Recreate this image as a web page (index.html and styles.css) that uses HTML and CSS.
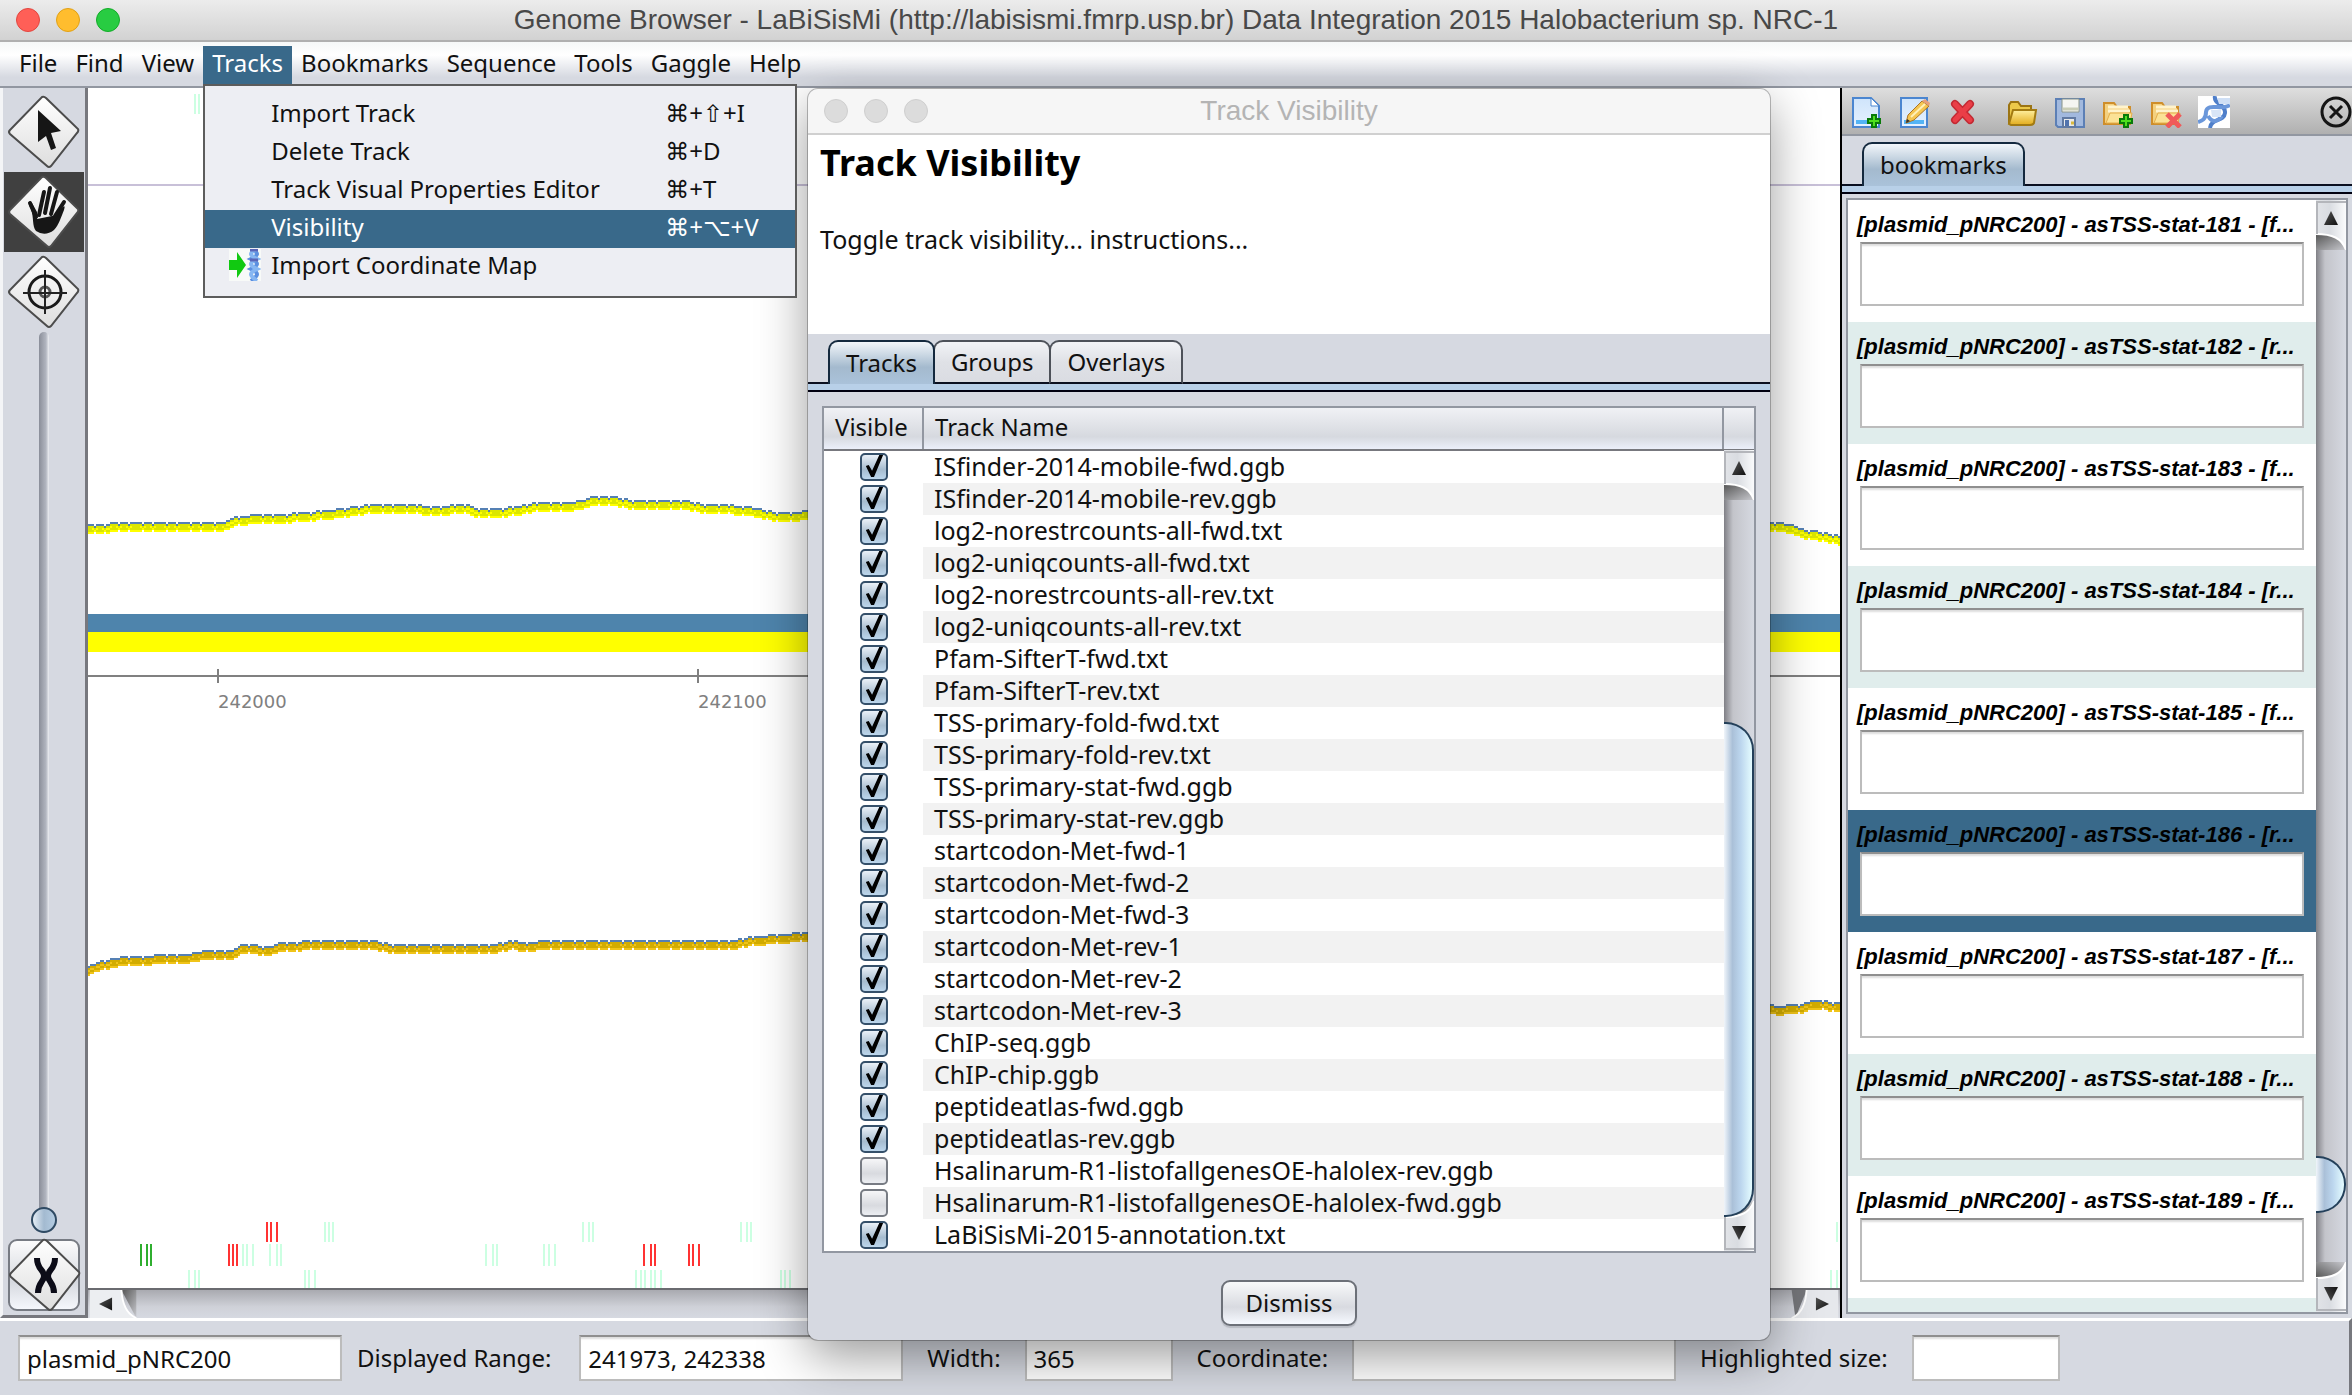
FILE: index.html
```html
<!DOCTYPE html>
<html lang="en">
    <head>
        <meta charset="utf-8">
        <title>Genome Browser</title>
        <meta name="viewport" content="width=device-width, initial-scale=1.0">
        <link rel="stylesheet" href="styles.css">
    </head>
    <body>
        <svg class="defs" aria-hidden="true">
            <defs>
                <linearGradient id="tile" x1="0" y1="0" x2="0" y2="1">
                    <stop offset="0" stop-color="#fff"/><stop offset="1" stop-color="#dedede"/>
                </linearGradient>
                <linearGradient id="ink" x1="0" y1="0" x2="1" y2="1">
                    <stop offset="0" stop-color="#555"/><stop offset="1" stop-color="#111"/>
                </linearGradient>
                <linearGradient id="paper" x1="0" y1="0" x2="0" y2="1">
                    <stop offset="0" stop-color="#cfe4fb"/><stop offset="1" stop-color="#e6f2ff"/>
                </linearGradient>
                <linearGradient id="gold" x1="0" y1="0" x2="0" y2="1">
                    <stop offset="0" stop-color="#fff0a0"/><stop offset="1" stop-color="#e3ac1c"/>
                </linearGradient>
                <linearGradient id="cap" x1="0" y1="0" x2="1" y2="0">
                    <stop offset="0" stop-color="#e2e4e8"/><stop offset=".45" stop-color="#d9dce1"/><stop offset="1" stop-color="#fafbfc"/>
                </linearGradient>
                <linearGradient id="shade" x1="0" y1="0" x2="1" y2="1">
                    <stop offset="0" stop-color="#555"/><stop offset="1" stop-color="#c8c9ce"/>
                </linearGradient>
                <symbol id="diamond" viewBox="0 0 78 78">
                    <path d="M38 7 L73 40 L44 74 L6 43 Z" fill="#888" opacity=".5"/>
                    <path d="M37 4 Q39 3 41 5 L73 36 Q74 38 72 40 L46 73 Q44 75 42 73 L5 41 Q3 39 5 37 Z" fill="url(#tile)" stroke="#4c4c4c" stroke-width="2"/>
                </symbol>
                <symbol id="plus" viewBox="0 0 14 14">
                    <path d="M5 1h4v4h4v4h-4v4h-4v-4h-4v-4h4z" fill="#4fe01e" stroke="#0a7a0a" stroke-width="2"/>
                </symbol>
                <symbol id="folder" viewBox="0 0 32 32">
                    <path d="M2 7h10l3 4h13v17H2z" fill="#f4d180" stroke="#cf8e2a" stroke-width="2"/>
                    <path d="M6 11h20M6 15h22" stroke="#fff3cc" stroke-width="3"/>
                    <path d="M4 27L8 17h22l-2 10z" fill="#fbe296" stroke="#e4ae4c"/>
                </symbol>
                <symbol id="up" viewBox="0 0 30 50">
                    <path d="M0 34H20L30 50H0z" fill="url(#shade)"/>
                    <path d="M0 0H30V50C26 38 16 34 0 34z" fill="url(#cap)"/>
                    <path d="M0 34C16 34 26 38 30 50" fill="none" stroke="#fff" stroke-width="2"/>
                    <path d="M1 34V2H30" fill="none" stroke="#b4b6bb" stroke-width="2"/>
                    <path d="M15 11L22 25H8z" fill="url(#ink)"/>
                </symbol>
            </defs>
        </svg>

        <header class="titlebar">
            <div class="lights"><i class="red"></i><i class="amber"></i><i class="green"></i></div>
            <span>Genome Browser - LaBiSisMi (http://labisismi.fmrp.usp.br) Data Integration 2015 Halobacterium sp. NRC-1</span>
        </header>

        <nav class="menubar">
            <button>File</button>
            <button>Find</button>
            <button>View</button>
            <div class="menu-holder">
                <button class="open">Tracks</button>
                <div class="menu">
                    <button><i></i><span>Import Track</span><kbd>⌘+⇧+I</kbd></button>
                    <button><i></i><span>Delete Track</span><kbd>⌘+D</kbd></button>
                    <button><i></i><span>Track Visual Properties Editor</span><kbd>⌘+T</kbd></button>
                    <button class="selected"><i></i><span>Visibility</span><kbd>⌘+⌥+V</kbd></button>
                    <button>
                        <svg class="map-icon" viewBox="0 0 32 32">
                            <rect width="32" height="32" fill="#f8faf8"/>
                            <path d="M0 11h8V3l9 13-9 13v-8H0z" fill="#11c911"/>
                            <path d="M22 0c8 4 8 6 0 10 8 4 8 6 0 10 8 4 8 6 0 12" fill="none" stroke="#5b8fe0" stroke-width="4"/>
                            <path d="M28 0c-8 4-8 6 0 10-8 4-8 6 0 10-8 4-8 6 0 12" fill="none" stroke="#86b6f2" stroke-width="4"/>
                            <path d="M21 1h8M21 11h8" stroke="#5a66b8" stroke-width="3"/>
                        </svg>
                        <span>Import Coordinate Map</span><kbd></kbd>
                    </button>
                </div>
            </div>
            <button>Bookmarks</button>
            <button>Sequence</button>
            <button>Tools</button>
            <button>Gaggle</button>
            <button>Help</button>
        </nav>

        <main>
            <div class="tools">
                <button aria-label="Select">
                    <svg viewBox="0 0 78 78"><use href="#diamond"/>
                        <path d="M33 17L56 38 46 40 51 55 46 57 41 43 33 49z" fill="#161616"/>
                    </svg>
                </button>
                <button class="active" aria-label="Hand">
                    <svg viewBox="0 0 78 78"><use href="#diamond"/>
                        <path d="M26 36C22 30 24 26 27 30L32 39V46L52 42C58 32 61 31 59 37C56 44 54 52 49 57Q40 64 31 58C27 53 29 45 26 36z" fill="#161616"/>
                        <path d="M34 42L39 19M40 40L45 15M46 41L52 19M50 43L59 29M31 44L25 30" stroke="#161616" stroke-width="4" stroke-linecap="round"/>
                    </svg>
                </button>
                <button aria-label="Crosshairs">
                    <svg viewBox="0 0 78 78"><use href="#diamond"/>
                        <circle cx="40" cy="39" r="16" fill="none" stroke="#1a1a1a" stroke-width="3"/>
                        <circle cx="40" cy="39" r="5" fill="none" stroke="#555" stroke-width="3"/>
                        <path d="M40 17V61M18 40H62" stroke="#222" stroke-width="2"/>
                    </svg>
                </button>
                <input class="zoom-slider" type="range" min="0" max="100" value="0" aria-label="Zoom">
                <button class="framed" aria-label="Chromosome">
                    <svg viewBox="0 0 78 78"><use href="#diamond"/>
                        <path d="M31 22C31 34 38 33 38 40C38 46 32 46 32 57M49 22C49 34 42 33 42 40C42 46 48 46 48 57" fill="none" stroke="#0c0c18" stroke-width="6"/>
                    </svg>
                </button>
            </div>

            <section class="view">
                <svg id="plot" viewBox="88 88 1752 1200" preserveAspectRatio="xMinYMin slice" shape-rendering="crispEdges">
                    <rect x="88" y="184" width="1752" height="2" fill="#c8c0d8"/>
                    <rect x="88" y="614" width="1752" height="18" fill="#4e84ac"/>
                    <rect x="88" y="632" width="1752" height="20" fill="#ff0"/>
                    <g fill="#808080">
                        <rect x="88" y="675" width="1752" height="2"/>
                        <rect x="217" y="669" width="2" height="14"/>
                        <rect x="697" y="669" width="2" height="14"/>
                        <text x="218" y="708">242000</text>
                        <text x="698" y="708">242100</text>
                    </g>
                </svg>
                <div class="hscroll">
                    <svg viewBox="0 0 50 30"><path d="M34 0H50V30z" fill="url(#shade)"/><path d="M0 0H34C35 16 40 26 50 30H0z" fill="#eceef1"/><path d="M34 0C35 16 40 26 50 30" fill="none" stroke="#fff" stroke-width="2"/><path d="M24 8V22L10 15z" fill="url(#ink)"/></svg>
                    <svg viewBox="0 0 50 30"><path d="M16 0H0L4 30z" fill="#75767a"/><path d="M50 0H16C15 16 10 26 0 30H50z" fill="#e6e8ec"/><path d="M16 0C15 16 10 26 0 30" fill="none" stroke="#fff" stroke-width="2"/><path d="M26 8V22L40 15z" fill="url(#ink)"/></svg>
                </div>
            </section>

            <aside class="sidebar">
                <div class="icons">
                    <button aria-label="New bookmark"><svg viewBox="0 0 32 32">
                        <path d="M3 2H21L29 10V31H3z" fill="url(#paper)" stroke="#4b86d0" stroke-width="2"/>
                        <path d="M21 2V10H29z" fill="#fff" stroke="#4b86d0"/><path d="M6 26H19" stroke="#53b4f5" stroke-width="4"/>
                        <use href="#plus" x="17" y="18" width="14" height="14"/></svg></button>
                    <button aria-label="Edit bookmark"><svg viewBox="0 0 32 32">
                        <path d="M3 2H29V31H3z" fill="url(#paper)" stroke="#4b86d0" stroke-width="2"/><path d="M6 26H26" stroke="#53b4f5" stroke-width="4"/>
                        <path d="M8 27L10 19 24 5 31 10 16 24z" fill="#f4c552" stroke="#ae7422"/><path d="M13 21L27 8" stroke="#fff0b8" stroke-width="2"/><path d="M24 5L27 3 32 7 31 10z" fill="#e8a07a"/><path d="M8 27L9 23 12 25z" fill="#333"/></svg></button>
                    <button aria-label="Delete bookmark"><svg viewBox="0 0 32 32">
                        <path d="M9 8L24 24M24 8L9 24" stroke="#c32a33" stroke-width="8" stroke-linecap="round"/><path d="M9 8L24 24M24 8L9 24" stroke="#ea3e47" stroke-width="5" stroke-linecap="round"/></svg></button>
                    <button class="spaced" aria-label="Open"><svg viewBox="0 0 32 32">
                        <path d="M3 28V9L5 6H12L15 10H25V14" fill="#ecc94a" stroke="#9b7413" stroke-width="2"/>
                        <path d="M3 28L7 14H30L28 27Q27 29 24 29H5z" fill="url(#gold)" stroke="#a37b12" stroke-width="2"/></svg></button>
                    <button aria-label="Save"><svg viewBox="0 0 32 32">
                        <path d="M2 3H30V31H4L2 29z" fill="#a2b9de" stroke="#5c7fb5" stroke-width="2"/>
                        <path d="M8 3H25V16H8z" fill="#f5f5f1" stroke="#8a9487"/><path d="M9 13H24" stroke="#c9cdb6" stroke-width="3"/>
                        <path d="M9 22H21V31H9z" fill="#e9eaea" stroke="#617aa2" stroke-width="2"/><path d="M11 24H15V30H11z" fill="#5173ad"/><path d="M17 27H20" stroke="#d9b93e" stroke-width="3"/></svg></button>
                    <button aria-label="Add group"><svg viewBox="0 0 32 32"><use href="#folder"/><use href="#plus" x="17" y="18" width="14" height="14"/></svg></button>
                    <button aria-label="Remove group"><svg viewBox="0 0 32 32"><use href="#folder"/><path d="M17 18L30 31M30 18L17 31" stroke="#f05a5a" stroke-width="5"/></svg></button>
                    <button aria-label="Sequence"><svg viewBox="0 0 32 32">
                        <rect width="32" height="32" fill="#fff"/>
                        <path d="M17 0C15 8 28 8 27 17C26 26 13 22 12 32" fill="none" stroke="#4f7fca" stroke-width="4"/>
                        <path d="M32 9C24 15 9 6 8 16C8 24 3 25 0 26M10 20C15 28 20 25 24 20" fill="none" stroke="#6b97da" stroke-width="4"/>
                        <path d="M19 2H32V8L21 8z" fill="#cfdff5"/><path d="M13 14H23V21H14z" fill="#d8e5f7"/></svg></button>
                    <button class="close" aria-label="Close"><svg viewBox="0 0 32 32">
                        <circle cx="16" cy="16" r="14" fill="none" stroke="#151515" stroke-width="3"/><path d="M10 10L22 22M22 10L10 22" stroke="#151515" stroke-width="3"/></svg></button>
                </div>
                <div class="tabs"><button class="tab on">bookmarks</button></div>
                <div class="tab-line"></div>
                <div class="list-box">
                    <ul id="bookmarks"></ul>
                    <div class="scrollbar">
                        <svg><use href="#up"/></svg>
                        <div class="before"></div>
                        <div class="thumb"></div>
                        <div class="after"></div>
                        <svg class="down"><use href="#up"/></svg>
                    </div>
                </div>
            </aside>
        </main>

        <footer class="status">
            <input class="wide" type="text" value="plasmid_pNRC200" aria-label="Sequence">
            <label class="near" for="range">Displayed Range:</label>
            <input class="wide" type="text" id="range" value="241973, 242338">
            <label for="width">Width:</label>
            <input type="text" id="width" value="365">
            <label for="coordinate">Coordinate:</label>
            <input class="wide" type="text" id="coordinate">
            <label for="highlighted">Highlighted size:</label>
            <input type="text" id="highlighted">
        </footer>

        <div class="dialog" role="dialog" aria-label="Track Visibility">
            <div class="dialog-title">
                <div class="lights"><i></i><i></i><i></i></div>
                <span>Track Visibility</span>
            </div>
            <div class="intro">
                <h1>Track Visibility</h1>
                <p>Toggle track visibility... instructions...</p>
            </div>
            <div class="tabs">
                <button class="tab on">Tracks</button>
                <button class="tab">Groups</button>
                <button class="tab">Overlays</button>
            </div>
            <div class="tab-line"></div>
            <div class="table-box">
                <table>
                    <thead><tr><th class="check-col">Visible</th><th>Track Name</th><th class="corner"></th></tr></thead>
                    <tbody id="tracks"></tbody>
                </table>
                <div class="scrollbar">
                    <svg><use href="#up"/></svg>
                    <div class="before"></div>
                    <div class="thumb"></div>
                    <svg class="down"><use href="#up"/></svg>
                </div>
            </div>
            <button class="dismiss">Dismiss</button>
        </div>

        <script>
            const tracks = [
                'ISfinder-2014-mobile-fwd.ggb',
                'ISfinder-2014-mobile-rev.ggb',
                'log2-norestrcounts-all-fwd.txt',
                'log2-uniqcounts-all-fwd.txt',
                'log2-norestrcounts-all-rev.txt',
                'log2-uniqcounts-all-rev.txt',
                'Pfam-SifterT-fwd.txt',
                'Pfam-SifterT-rev.txt',
                'TSS-primary-fold-fwd.txt',
                'TSS-primary-fold-rev.txt',
                'TSS-primary-stat-fwd.ggb',
                'TSS-primary-stat-rev.ggb',
                'startcodon-Met-fwd-1',
                'startcodon-Met-fwd-2',
                'startcodon-Met-fwd-3',
                'startcodon-Met-rev-1',
                'startcodon-Met-rev-2',
                'startcodon-Met-rev-3',
                'ChIP-seq.ggb',
                'ChIP-chip.ggb',
                'peptideatlas-fwd.ggb',
                'peptideatlas-rev.ggb',
                'Hsalinarum-R1-listofallgenesOE-halolex-rev.ggb',
                'Hsalinarum-R1-listofallgenesOE-halolex-fwd.ggb',
                'LaBiSisMi-2015-annotation.txt'
            ]
            const hidden = [22, 23]

            document.querySelector('#tracks').innerHTML = tracks.map(function (name, i) {
                const checked = hidden.includes(i) ? '' : ' checked'
                return `<tr><td class="check-col"><input type="checkbox" id="track${i}"${checked}></td>` +
                    `<td class="name" colspan="2"><label for="track${i}">${name}</label></td></tr>`
            }).join('')

            const strands = ['f', 'r', 'f', 'r', 'f', 'r', 'f', 'r', 'f']
            document.querySelector('#bookmarks').innerHTML = strands.map(function (strand, i) {
                const n = 181 + i
                return `<li${n === 186 ? ' class="selected"' : ''}>` +
                    `<label for="note${n}">[plasmid_pNRC200] - asTSS-stat-${n} - [${strand}...</label>` +
                    `<textarea id="note${n}"></textarea></li>`
            }).join('') + '<li></li>'

            const plot = document.querySelector('#plot')
            let shapes = ''

            // one gene mark is a group of thin vertical bars
            function marks(color, y, height, xs) {
                for (const x of xs) {
                    shapes += `<rect x="${x - 1}" y="${y}" width="2" height="${height}" fill="${color}"/>`
                }
            }

            marks('#ccffe2', 94, 20, [195, 199])
            marks('#f33', 1222, 20, [267, 271, 277])
            marks('#ccffe2', 1222, 20, [325, 329, 333, 583, 589, 593, 741, 747, 751, 1837])
            marks('#2fae2f', 1244, 22, [141, 147, 151])
            marks('#f33', 1244, 22, [229, 233, 237, 644, 651, 655, 689, 693, 699])
            marks('#ccffe2', 1244, 22, [243, 247, 253, 270, 277, 281, 486, 493, 497, 544, 549, 555])
            marks('#ccffe2', 1270, 18, [189, 195, 199, 305, 309, 315, 636, 641, 645, 651, 655, 661, 781, 785, 790, 1831, 1837])

            function level(points, x) {
                for (let i = 1; i < points.length; i++) {
                    const [x0, y0] = points[i - 1]
                    const [x1, y1] = points[i]
                    if (x <= x1) return y0 + (y1 - y0) * (x - x0) / (x1 - x0)
                }
                return points[points.length - 1][1]
            }

            // small pixel rings, one per base
            function rings(points, drop, color) {
                let d = ''
                for (let x = points[0][0]; x <= points[points.length - 1][0]; x += 4.8) {
                    const px = Math.round(x / 2) * 2
                    const py = Math.round(level(points, x) / 2) * 2 + drop
                    d += `M${px - 2} ${py}h4v2h-4zM${px - 4} ${py + 2}h2v2h-2zM${px + 2} ${py + 2}h2v2h-2zM${px - 2} ${py + 4}h4v2h-4z`
                }
                shapes += `<path d="${d}" fill="${color}"/>`
            }

            const forward = [[88, 524], [100, 524], [131, 521], [225, 521], [235, 517], [267, 513], [282, 514], [335, 509], [382, 503], [403, 503], [434, 506], [463, 504], [486, 509], [518, 506], [539, 501], [575, 501], [596, 496], [617, 497], [638, 501], [664, 499], [690, 501], [706, 504], [732, 505], [753, 507], [774, 511], [790, 512], [812, 510]]
            const forwardEnd = [[1768, 522], [1787, 523], [1807, 530], [1827, 532], [1840, 536]]
            const reverse = [[88, 966], [99, 961], [131, 955], [146, 957], [162, 953], [193, 953], [209, 949], [235, 949], [240, 945], [256, 944], [267, 947], [277, 943], [314, 940], [377, 940], [387, 943], [497, 943], [510, 940], [528, 943], [539, 940], [737, 940], [748, 937], [774, 934], [812, 932]]
            const reverseEnd = [[1768, 1003], [1783, 1007], [1787, 1003], [1805, 1003], [1810, 999], [1827, 1001], [1840, 1001]]

            for (const line of [forward, forwardEnd]) {
                rings(line, 0, '#5580b4')
                rings(line, 4, '#ff0')
                rings(line, 2, '#dbe600')
            }
            for (const line of [reverse, reverseEnd]) {
                rings(line, 0, '#5580b4')
                rings(line, 4, '#f0c419')
                rings(line, 2, '#d2ac00')
            }
            plot.insertAdjacentHTML('beforeend', shapes)
        </script>
    </body>
</html>
```
FILE: styles.css
```css
* {
    box-sizing: border-box;
}

body {
    margin: 0;
    height: 100vh;
    display: flex;
    flex-direction: column;
    position: relative;
    overflow: hidden;
    background: #d6d9e1;
    color: #111;
    font-family: "Noto Sans", "DejaVu Sans", sans-serif;
    font-size: 24px;
    line-height: 32px;
}

button, input, textarea {
    font: inherit;
    color: inherit;
    margin: 0;
}

button {
    border: 0;
    padding: 0;
    background: none;
}

svg {
    display: block;
}

.defs {
    position: absolute;
    width: 0;
    height: 0;
}

/* window title */

.titlebar, .dialog-title {
    position: relative;
    flex: none;
    display: flex;
    align-items: center;
    justify-content: center;
    font-family: "Liberation Sans", Arial, sans-serif;
    font-size: 28px;
}

.titlebar {
    height: 42px;
    background: linear-gradient(#ececec, #d2d2d2);
    border-bottom: 2px solid #b0b0b0;
    color: #484848;
}

.lights {
    position: absolute;
    left: 16px;
    display: flex;
    gap: 16px;
}

.lights i {
    width: 24px;
    height: 24px;
    border-radius: 50%;
    background: #dcdcdc;
    border: 1px solid #cfcfcf;
}

.lights .red { background: #ff5f57; border-color: #e2463f; }
.lights .amber { background: #ffbd2e; border-color: #e1a116; }
.lights .green { background: #28cc42; border-color: #12ac28; }

/* menus */

.menubar {
    display: flex;
    flex: none;
    height: 46px;
    padding: 4px 10px 2px;
    background: linear-gradient(#f6f8f8, #fff 30%, #d6d9e1 80%);
    border-bottom: 2px solid #9297a1;
}

.menubar > button, .open {
    height: 38px;
    padding: 0 9px 4px;
}

.menu-holder {
    position: relative;
}

.open, .menu .selected {
    background: #39698a;
    color: #fff;
}

.menu {
    position: absolute;
    z-index: 3;
    left: 0;
    top: 38px;
    width: 594px;
    padding: 10px 0;
    background: #edeef3;
    border: 2px solid #5c5c5c;
}

.menu button {
    display: grid;
    grid-template-columns: 32px 384px 1fr;
    column-gap: 10px;
    align-items: center;
    width: 100%;
    height: 38px;
    padding: 0 0 4px 24px;
    text-align: left;
}

.menu kbd {
    font-family: inherit;
}

.map-icon {
    width: 32px;
    height: 32px;
}

main {
    flex: 1;
    display: flex;
    min-height: 0;
}

/* left tool strip */

.tools {
    width: 88px;
    flex: none;
    display: flex;
    flex-direction: column;
    align-items: center;
    padding: 4px 0;
    border-left: 3px solid #f4f5f7;
    border-right: 3px solid #77787e;
    border-bottom: 3px solid #77787e;
}

.tools button {
    width: 80px;
    height: 80px;
}

.tools svg {
    width: 78px;
    height: 78px;
    margin-left: 1px;
}

.tools .active {
    background: #404040;
}

.tools .framed {
    height: 72px;
    width: 72px;
    border: 2px solid #777b83;
    border-radius: 9px;
    background: linear-gradient(#fbfbfc, #d6d9df 60%, #f5f7fc);
    display: grid;
    place-content: center;
}

.zoom-slider {
    flex: 1;
    min-height: 0;
    width: 28px;
    margin-bottom: 6px;
    appearance: none;
    background: none;
    writing-mode: vertical-lr;
    direction: rtl;
}

.zoom-slider::-webkit-slider-runnable-track {
    width: 10px;
    height: 100%;
    border-radius: 5px;
    background: linear-gradient(to right, #8a8e99, #b2b6c0 70%, #eef0f4);
}

.zoom-slider::-webkit-slider-thumb {
    appearance: none;
    width: 26px;
    height: 26px;
    margin-left: -8px;
    border: 2px solid #2f4a63;
    border-radius: 50%;
    background: linear-gradient(to right, #e4edf5, #a3bad0 50%, #b4cce2);
}

/* track view */

.view {
    flex: 1;
    min-width: 0;
    display: flex;
    flex-direction: column;
    background: #fff;
}

#plot {
    flex: 1;
    min-height: 0;
    width: 100%;
    font-family: "DejaVu Sans", sans-serif;
    font-size: 18px;
}

.hscroll {
    height: 30px;
    flex: none;
    display: flex;
    justify-content: space-between;
    border-top: 2px solid #6a6b70;
    background: linear-gradient(#a9aab0, #cfd1d8 60%, #d6d9e1);
}

.hscroll svg {
    width: 50px;
    height: 28px;
}

/* bookmarks */

.sidebar {
    width: 512px;
    flex: none;
    display: flex;
    flex-direction: column;
    min-height: 0;
    border-left: 2px solid #000;
}

.icons {
    display: flex;
    align-items: center;
    gap: 16px;
    height: 48px;
    flex: none;
    padding: 2px 0 0 8px;
    background: linear-gradient(#dedede, #b0b0b0);
    border-bottom: 2px solid #9297a1;
}

.icons svg {
    width: 32px;
    height: 32px;
}

.icons .spaced {
    margin-left: 12px;
}

.icons .close {
    margin-left: auto;
}

.tabs {
    display: flex;
    flex: none;
    padding: 6px 20px 0;
}

.tab {
    position: relative;
    height: 44px;
    padding: 0 16px;
    border: 2px solid #4d5159;
    border-bottom-color: #0b1020;
    border-radius: 10px 10px 0 0;
    background: linear-gradient(#f2f3f6, #dfe1e6 50%, #dadce2);
}

.tab + .tab {
    margin-left: -2px;
}

.tab.on {
    z-index: 1;
    border-color: #14293e;
    border-bottom: 0;
    background: linear-gradient(#f2f6fa, #a4bace 60%, #aac2da);
}

.tab-line {
    height: 10px;
    flex: none;
    margin-top: -2px;
    border-top: 2px solid #0b1020;
    border-bottom: 2px solid #000010;
    background: #b8d0e8;
}

.list-box {
    flex: 1;
    min-height: 0;
    display: flex;
    margin: 4px 4px 4px;
    border: 2px solid #9297a1;
}

#bookmarks {
    flex: 1;
    min-width: 0;
    margin: 0;
    padding: 0;
    overflow: hidden;
    list-style: none;
}

#bookmarks li {
    height: 122px;
    padding: 8px 12px 0 9px;
    background: #fff;
}

#bookmarks li:nth-child(even) {
    background: #e0edec;
}

#bookmarks .selected:nth-child(even) {
    background: #39698a;
}

#bookmarks label {
    display: block;
    white-space: nowrap;
    color: #000;
    font: italic bold 22px/34px "Liberation Sans", Arial, sans-serif;
}

#bookmarks textarea {
    display: block;
    width: calc(100% - 3px);
    height: 64px;
    margin-left: 3px;
    resize: none;
}

textarea, .status input {
    border: 2px solid #bcbcbc;
    border-top-color: #8f8f8f;
    background: #fff;
    box-shadow: inset 0 3px 2px -1px #ddd;
}

.scrollbar {
    width: 30px;
    flex: none;
    display: flex;
    flex-direction: column;
    background: linear-gradient(to right, #808086, #c3c4ca 30%, #d6d9e1);
}

.scrollbar svg {
    width: 30px;
    height: 50px;
    flex: none;
}

.scrollbar .down {
    transform: scaleY(-1);
}

.thumb {
    border: 2px solid #24405a;
    border-left: 0;
    border-radius: 0 28px 28px 0;
    background: linear-gradient(to right, #f0f5fa, #aac0d8 30%, #bcd6ee 60%, #e4fcff);
}

.sidebar .before { flex: 904; }
.sidebar .after { flex: 49; }
.sidebar .thumb { height: 57px; }

/* status bar */

.status {
    display: flex;
    flex: none;
    align-items: center;
    height: 77px;
    padding-left: 18px;
    border-top: 3px solid #fff;
    border-right: 3px solid #77787e;
}

.status input {
    width: 148px;
    height: 46px;
    padding: 0 7px;
}

.status .wide {
    width: 324px;
}

.status label {
    padding: 0 24px;
}

.status .near {
    padding: 0 28px 0 15px;
}

/* track visibility window */

.dialog {
    position: absolute;
    z-index: 2;
    left: 808px;
    top: 89px;
    width: 962px;
    display: flex;
    flex-direction: column;
    border-radius: 10px;
    background: #d6d9e1;
    box-shadow: 0 0 0 1px rgba(0, 0, 0, 0.25), 0 16px 50px rgba(0, 0, 0, 0.4);
}

.dialog-title {
    height: 46px;
    border-bottom: 2px solid #d0d0d0;
    border-radius: 10px 10px 0 0;
    background: #f6f6f6;
    color: #b4b4b4;
}

.intro {
    height: 199px;
    padding: 6px 12px;
    background: #fff;
}

.intro h1 {
    margin: 0 0 38px;
    font-size: 36px;
    line-height: 44px;
    color: #000;
}

.intro p {
    margin: 0;
    font-size: 25px;
}

.table-box {
    position: relative;
    margin: 14px 14px 0;
    border: 2px solid #9297a1;
    background: #fff;
}

table {
    width: 100%;
    table-layout: fixed;
    border-collapse: collapse;
}

th {
    height: 42px;
    padding: 0 11px 3px;
    font-weight: normal;
    text-align: left;
    background: linear-gradient(#f0f1f5, #d6d9df 70%, #ebeffa);
    border-right: 2px solid #9297a1;
    border-bottom: 2px solid #77787e;
}

.check-col {
    width: 99px;
}

.corner {
    width: 31px;
    border-right: 0;
}

td {
    height: 32px;
    padding: 0 0 0 36px;
}

td.name {
    padding: 0 11px;
}

tr:nth-child(even) .name {
    background: #f2f2f2;
}

td label {
    display: block;
    height: 32px;
    font-size: 25px;
    line-height: 30px;
}

td input {
    display: block;
    appearance: none;
    width: 28px;
    height: 28px;
    border: 2px solid #777b83;
    border-radius: 5px;
    background: linear-gradient(#f6f6f8, #d8dadf 60%, #eceef2);
}

td input:checked {
    border-color: #35506a;
    background: linear-gradient(#eaf1f8, #a6bccf 60%, #bcd6ec);
}

td input:checked::before {
    content: "";
    display: block;
    width: 24px;
    height: 24px;
    background: #000;
    clip-path: polygon(16% 46%, 28% 42%, 42% 66%, 72% 0, 88% 0, 50% 92%, 38% 92%);
}

.table-box .scrollbar {
    position: absolute;
    right: 0;
    top: 42px;
    bottom: 0;
}

.table-box .before {
    height: 222px;
}

.table-box .thumb {
    position: relative;
    z-index: 1;
    flex: 1;
    margin-bottom: -16px;
}

.dismiss {
    align-self: center;
    width: 136px;
    height: 46px;
    margin: 27px 0 14px;
    border: 2px solid #6c7078;
    border-radius: 9px;
    background: linear-gradient(#f8f9fa, #d8dae0 60%, #f6f9ff);
    box-shadow: 0 2px 1px #b9bcc4;
}
```
